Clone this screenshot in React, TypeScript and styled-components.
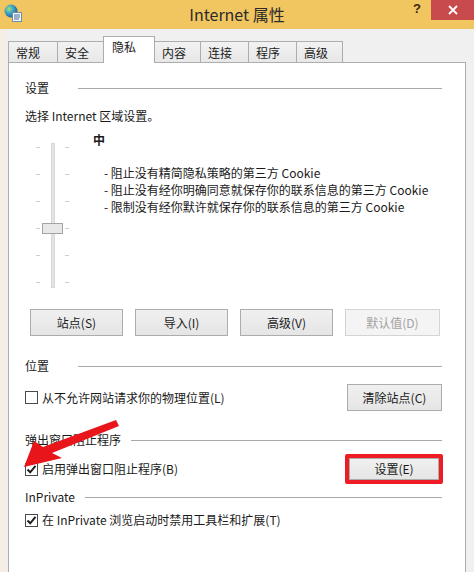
import styled, {createGlobalStyle} from "styled-components"

const GlobalStyle = createGlobalStyle`
  html, body {
    margin: 0;
    padding: 0;
    background: #f0f0f0;
  }
  body {
    font-family: "Noto Sans CJK SC", "Noto Sans", sans-serif;
    font-size: 12px;
    color: #1a1a1a;
  }
`

const Window = styled.div`
  position: relative;
  width: 474px;
  height: 572px;
  overflow: hidden;
  display: flex;
  flex-direction: column;
  background: #f0f0f0;
`
const TitleBar = styled.div`
  position: relative;
  height: 29px;
  flex: none;
  display: flex;
  align-items: center;
  justify-content: center;
  background: #f1c660;
`
const AppIcon = styled.svg`
  position: absolute;
  left: 3px;
  top: 3px;
`
const Title = styled.div`
  font-size: 16px;
  line-height: 20px;
  color: #2a2a2a;
  margin-top: -1px;
`
const HelpBtn = styled.div`
  position: absolute;
  left: 410px;
  top: 0;
  width: 14px;
  height: 18px;
  font: bold 13px/18px "Liberation Sans", sans-serif;
  color: #3a2a10;
  text-align: center;
`
const CloseBtn = styled.div`
  position: absolute;
  right: 0;
  top: 0;
  width: 43px;
  height: 20px;
  background: #c94a4c;
  display: flex;
  align-items: center;
  justify-content: center;
`
const Client = styled.div`
  flex: 1;
  display: flex;
  flex-direction: column;
  padding: 7px 8px 0 8px;
  background: linear-gradient(to right, #f4eee4 0, #f4eee4 6px, #f0f0f0 6px);
`
const TabStrip = styled.div`
  display: flex;
  align-items: flex-end;
  height: 27px;
  margin-bottom: -1px;
  position: relative;
  z-index: 1;
`
const Tab = styled.div<{ $active?: boolean; $w: number }>`
  box-sizing: border-box;
  width: ${p => p.$w + 1}px;
  height: ${p => (p.$active ? 27 : 22)}px;
  margin-right: -1px;
  border: 1px solid #adadad;
  border-bottom: ${p => (p.$active ? "none" : "1px solid #adadad")};
  background: ${p => (p.$active ? "#fff" : "linear-gradient(#f2f2f2, #e8e8e8)")};
  padding: ${p => (p.$active ? "2px 0 0 8px" : "3px 0 0 7px")};
  line-height: 16px;
  position: relative;
  z-index: ${p => (p.$active ? 2 : 1)};
`
const Panel = styled.div`
  flex: 1;
  background: #fff;
  border: 1px solid #adadad;
  border-bottom: none;
  padding: 0 23px 0 16px;
  display: flex;
  flex-direction: column;
`
const GroupHeader = styled.div<{ $mt: number }>`
  display: flex;
  align-items: center;
  height: 16px;
  margin-top: ${p => p.$mt}px;
  line-height: 16px;
`
const GroupLabel = styled.span`
  min-width: 43px;
  padding-right: 10px;
  white-space: nowrap;
`
const GroupLine = styled.div`
  flex: 1;
  height: 1px;
  background: #a9a9a9;
`
const Desc = styled.div`
  margin-top: 12px;
  line-height: 16px;
`
const SliderArea = styled.div`
  display: flex;
  margin-top: 8px;
  height: 163px;
`
const LevelText = styled.div`
  display: flex;
  flex-direction: column;
`
const Level = styled.div`
  font-weight: bold;
  line-height: 16px;
`
const Bullets = styled.ul`
  list-style: none;
  margin: 16px 0 0 11px;
  padding: 0;
`
const Bullet = styled.li`
  line-height: 17px;
  white-space: nowrap;
`
const ButtonRow = styled.div`
  display: flex;
  gap: 12px;
  margin-top: 14px;
  padding-left: 5px;
`
const Button = styled.div<{ $w?: number; $h?: number; $disabled?: boolean }>`
  box-sizing: border-box;
  width: ${p => p.$w ?? 93}px;
  height: ${p => p.$h ?? 27}px;
  border: 1px solid ${p => (p.$disabled ? "#d4d4d4" : "#acacac")};
  background: ${p => (p.$disabled ? "#f4f4f4" : "linear-gradient(#f0f0f0, #e5e5e5)")};
  color: ${p => (p.$disabled ? "#a3a3a3" : "#1a1a1a")};
  display: flex;
  align-items: center;
  justify-content: center;
  line-height: 16px;
`
const OptionRow = styled.div<{ $mt: number; $h: number }>`
  display: flex;
  align-items: center;
  justify-content: space-between;
  margin-top: ${p => p.$mt}px;
  height: ${p => p.$h}px;
`
const CheckLabel = styled.label`
  display: flex;
  align-items: center;
  gap: 4px;
  line-height: 16px;
  white-space: nowrap;
`
const Box = styled.span`
  box-sizing: border-box;
  width: 13px;
  height: 13px;
  border: 1px solid #4a4a4a;
  background: #fff;
  display: flex;
  align-items: center;
  justify-content: center;
`
const Highlight = styled.div`
  box-sizing: border-box;
  width: 98px;
  height: 30px;
  border: 4px solid #ee1c24;
  border-radius: 2px;
  margin-right: -1px;
`
const Annotation = styled.svg`
  position: absolute;
  left: 0;
  top: 0;
  pointer-events: none;
`

function Check({checked}: { checked?: boolean }) {
  return <Box>
    {checked && <svg width="11" height="11" viewBox="0 0 11 11">
      <path d="M1.5 5.5 L4.2 8.3 L9.5 1.8" fill="none" stroke="#1e1e1e" strokeWidth="2"/>
    </svg>}
  </Box>
}

function Slider() {
  const ticks = [15, 42, 69, 96, 123, 150]
  return <svg width="68" height="163" viewBox="0 0 68 163">
    {ticks.map(y => <g key={y} stroke="#cfcfcf" strokeWidth="1">
      <line x1="11" x2="15" y1={y + 0.5} y2={y + 0.5}/>
      <line x1="40" x2="44" y1={y + 0.5} y2={y + 0.5}/>
    </g>)}
    <rect x="26.5" y="11.5" width="3" height="144" fill="#e4e4e4" stroke="#d8d8d8"/>
    <rect x="17.5" y="91.5" width="20" height="10" fill="#e8e8e8" stroke="#a4a4a4"/>
  </svg>
}

const tabs = [
  {label: "常规", w: 49},
  {label: "安全", w: 46},
  {label: "隐私", w: 51, active: true},
  {label: "内容", w: 46},
  {label: "连接", w: 48},
  {label: "程序", w: 48},
  {label: "高级", w: 46},
]

export default function App() {
  return <Window>
    <GlobalStyle/>
    <TitleBar>
      <AppIcon width="20" height="20" viewBox="0 0 20 20">
        <defs>
          <radialGradient id="globe" cx="0.35" cy="0.35" r="0.7">
            <stop offset="0" stopColor="#9fe07a"/>
            <stop offset="0.5" stopColor="#3aa0c8"/>
            <stop offset="1" stopColor="#1d5f9a"/>
          </radialGradient>
        </defs>
        <circle cx="8" cy="8" r="6.5" fill="url(#globe)"/>
        <rect x="9.5" y="9.5" width="9" height="9" fill="#f7f7f7" stroke="#6b8bb0"/>
        <line x1="11" x2="17" y1="12" y2="12" stroke="#3d6aa0"/>
        <line x1="11" x2="17" y1="14" y2="14" stroke="#3d6aa0"/>
        <line x1="11" x2="16" y1="16" y2="16" stroke="#3d6aa0"/>
      </AppIcon>
      <Title>Internet 属性</Title>
      <HelpBtn>?</HelpBtn>
      <CloseBtn>
        <svg width="10" height="10" viewBox="0 0 10 10">
          <path d="M1 1 L9 9 M9 1 L1 9" stroke="#fff" strokeWidth="1.8"/>
        </svg>
      </CloseBtn>
    </TitleBar>
    <Client>
      <TabStrip>
        {tabs.map(t => <Tab key={t.label} $w={t.w} $active={t.active}>{t.label}</Tab>)}
      </TabStrip>
      <Panel>
        <GroupHeader $mt={17}><GroupLabel>设置</GroupLabel><GroupLine/></GroupHeader>
        <Desc>选择 Internet 区域设置。</Desc>
        <SliderArea>
          <Slider/>
          <LevelText>
            <Level>中</Level>
            <Bullets>
              <Bullet>- 阻止没有精简隐私策略的第三方 Cookie</Bullet>
              <Bullet>- 阻止没有经你明确同意就保存你的联系信息的第三方 Cookie</Bullet>
              <Bullet>- 限制没有经你默许就保存你的联系信息的第三方 Cookie</Bullet>
            </Bullets>
          </LevelText>
        </SliderArea>
        <ButtonRow>
          <Button>站点(S)</Button>
          <Button>导入(I)</Button>
          <Button>高级(V)</Button>
          <Button $w={95} $disabled>默认值(D)</Button>
        </ButtonRow>

        <GroupHeader $mt={22}><GroupLabel>位置</GroupLabel><GroupLine/></GroupHeader>
        <OptionRow $mt={10} $h={27}>
          <CheckLabel><Check/>从不允许网站请求你的物理位置(L)</CheckLabel>
          <Button $w={95}>清除站点(C)</Button>
        </OptionRow>

        <GroupHeader $mt={21}><GroupLabel>弹出窗口阻止程序</GroupLabel><GroupLine/></GroupHeader>
        <OptionRow $mt={6} $h={30}>
          <CheckLabel><Check checked/>启用弹出窗口阻止程序(B)</CheckLabel>
          <Highlight>
            <Button $w={90} $h={22}>设置(E)</Button>
          </Highlight>
        </OptionRow>

        <GroupHeader $mt={5}><GroupLabel>InPrivate</GroupLabel><GroupLine/></GroupHeader>
        <OptionRow $mt={7} $h={16}>
          <CheckLabel><Check checked/>在 InPrivate 浏览启动时禁用工具栏和扩展(T)</CheckLabel>
        </OptionRow>
      </Panel>
    </Client>
    <Annotation width="474" height="572" viewBox="0 0 474 572">
      <polygon
        points="24,467 34,441 43,447 116,420 119,426 52,453 62,458"
        fill="#e8151b"/>
    </Annotation>
  </Window>
}
